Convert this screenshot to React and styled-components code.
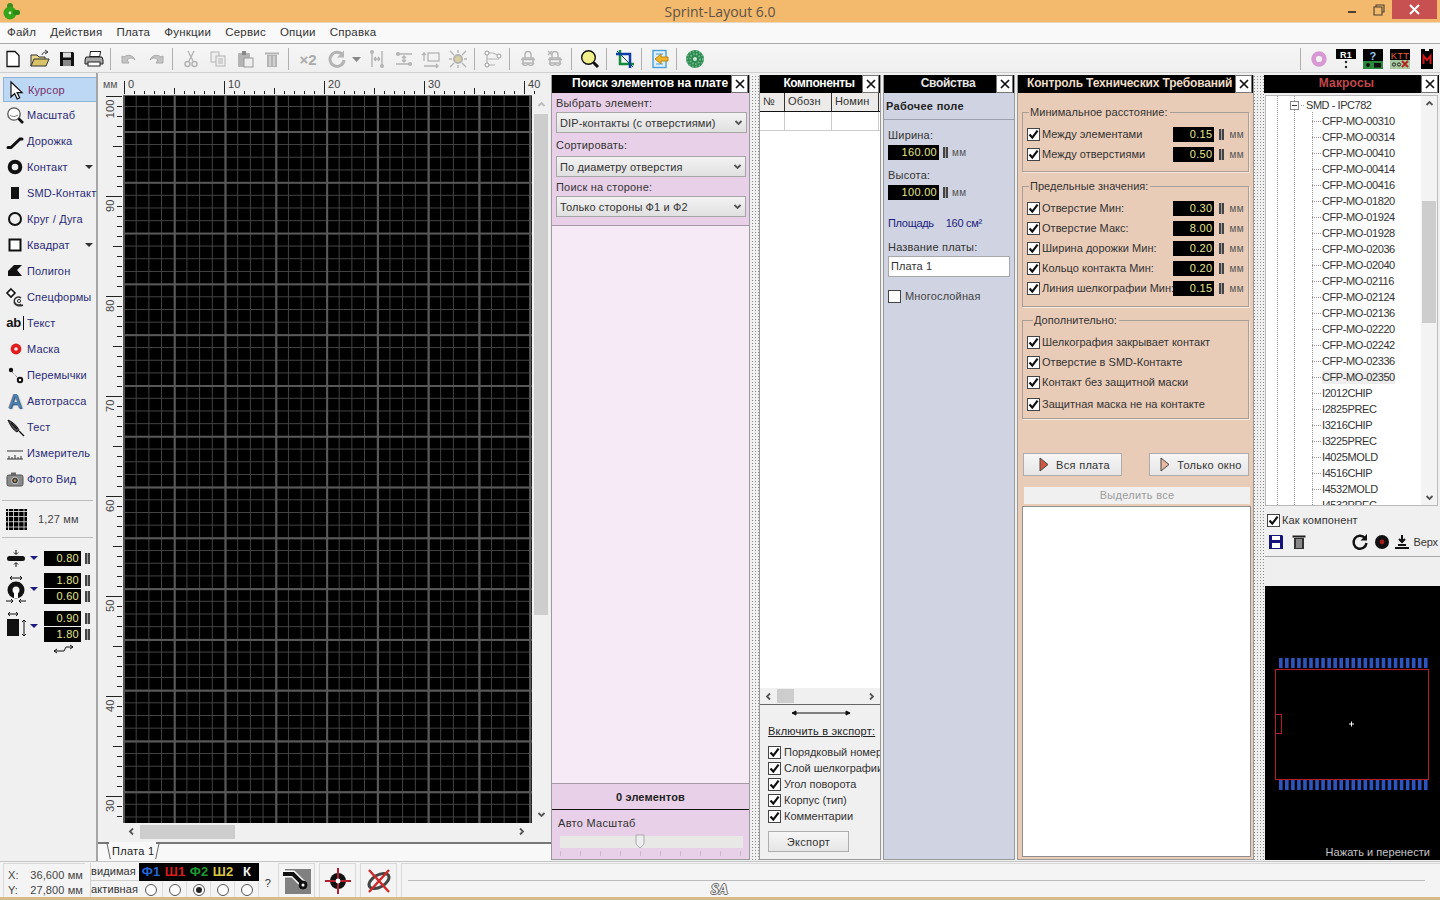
import React from "react";
import styled, { createGlobalStyle } from "styled-components";

const Global = createGlobalStyle`
  html, body { margin: 0; padding: 0; background: #f0f0f0; overflow: hidden; }
  * { box-sizing: border-box; }
`;

const Window = styled.div`
  width: 1440px; height: 900px; display: flex; flex-direction: column; overflow: hidden;
  background: #f0f0f0; color: #222; font-family: "Liberation Sans", Arial, sans-serif; font-size: 11px; letter-spacing: .15px;
`;
const TitleBar = styled.div`
  height: 23px; flex: none; display: grid; grid-template-columns: 1fr auto 1fr; align-items: center;
  background: #f3b96d; border-bottom: 1px solid #e9d6ba;
`;
const TitleText = styled.div`font: 14px "Open Sans", sans-serif; color: #5d5346; letter-spacing: 0; padding-top: 1px;`;
const TitleLogo = styled.div`display: flex; padding-left: 1px;`;
const WinControls = styled.div`display: flex; justify-content: flex-end; align-items: flex-start; height: 100%;`;
const WinBtn = styled.div`
  width: ${p => p.$w}px; height: 19px; display: flex; align-items: center; justify-content: center;
  background: ${p => p.$close ? "#c75050" : "transparent"}; margin-right: ${p => p.$close ? 3 : 0}px;
`;
const MenuBar = styled.div`
  height: 21px; flex: none; display: flex; gap: 14px; align-items: center; padding: 0 0 2px 7px;
  background: #f9f9f9; border-bottom: 1px solid #a8a8a8; font-size: 11.5px; letter-spacing: .23px; color: #333;
`;
const Toolbar = styled.div`
  height: 29px; flex: none; display: flex; align-items: center; padding-top: 2px;
  background: linear-gradient(#f6f6f6, #efefef); border-bottom: 1px solid #d0d0d0;
`;
const TBtn = styled.div`
  width: ${p => p.$w || 27}px; height: 24px; flex: none; display: flex; align-items: center; justify-content: center;
  margin-left: ${p => p.$ml || 0}px;
`;
const TSep = styled.div`width: 1px; height: 22px; flex: none; background: #b0b0b0; margin: 0 4px 0 3px;`;
const TSpacer = styled.div`flex: 1;`;
const X2 = styled.span`font-size: 15px; font-weight: 700; color: #aaa; letter-spacing: 0;`;
const Main = styled.div`height: 788px; flex: none; display: flex;`;

/* Left column */
const LeftCol = styled.div`
  width: 98px; flex: none; border-right: 2px solid #a5a5a5; padding-top: 3px; display: flex; flex-direction: column;
`;
const ToolRow = styled.div`
  height: 26px; display: flex; align-items: center; position: relative; padding-left: 3px;
  color: ${p => p.$active ? "#7a2f6a" : "#2b2b78"};
  ${p => p.$active && `background: #bcd8f4; border: 1px solid #8fb4d6; border-right: 0; margin-left: 3px; padding-left: 0; height: 25px; margin-top:1px;`}
`;
const ToolIcon = styled.div`width: 24px; height: 24px; flex: none; display: flex; align-items: center; justify-content: center; margin-right: 0;`;
const ToolText = styled.span`white-space: nowrap; padding-left: 0;`;
const ToolCaret = styled.span`
  margin-left: auto; margin-right: 3px; width: 0; height: 0; border-left: 4px solid transparent; border-right: 4px solid transparent; border-top: 4px solid #333;
`;
const AbText = styled.span`font-size: 13px; font-weight: 700; color: #111; border-right: 1px solid #111; padding-right: 2px; letter-spacing: -.3px; line-height: 14px;`;
const AutoA = styled.span`font-size: 20px; font-weight: 700; color: #4b7fb0; text-shadow: 1px 1px 1px #2c4f74; line-height: 20px;`;
const LeftDivider = styled.div`height: 1px; background: #bdbdbd; margin: ${p => p.$mt}px 3px 0 2px; flex: none;`;
const GridRow = styled.div`display: flex; align-items: center; height: 22px; margin-top: 7px; padding-left: 6px; gap: 11px; color: #444;`;
const GridIcon = styled.div`
  width: 21px; height: 21px; background-color: #000;
  background-image: linear-gradient(90deg, #ddd 1px, transparent 1px), linear-gradient(#ddd 1px, transparent 1px);
  background-size: 5.2px 5.2px; background-position: 2px 2px;
`;
const ParamGroup = styled.div`display: flex; margin-top: ${p => p.$mt}px; padding-left: 5px; align-items: center;`;
const ParamIcon = styled.div`width: 22px; flex: none; display: flex; justify-content: center;`;
const ParamCaret = styled.span`
  width: 0; height: 0; margin: 0 6px 0 3px; flex: none;
  border-left: 4px solid transparent; border-right: 4px solid transparent; border-top: 4px solid #1c1c80;
`;
const FieldStack = styled.div`display: flex; flex-direction: column; gap: 1px;`;
const FieldLine = styled.div`display: flex; align-items: center; gap: ${p => p.$gap ?? 4}px; margin-top: ${p => p.$mt || 0}px;`;
const Field = styled.div`
  width: ${p => p.$w || 37}px; height: 15px; background: #000; color: #e6e68f; text-align: right; padding-right: 2px;
  font-size: 11px; line-height: 15px; letter-spacing: .3px; flex: none;
`;
const Spin = styled.div`
  width: 5px; height: 11px; flex: none;
  background: linear-gradient(90deg, #444 0 2px, #a0a0a0 2px 3px, #444 3px 5px);
`;
const SwapRow = styled.div`display: flex; justify-content: center; padding-left: 29px; margin-top: 2px;`;

/* Canvas area */
const CenterArea = styled.div`width: 453px; flex: none; display: flex; flex-direction: column; background: #f0f0f0;`;
const RulerTop = styled.svg`display: block; flex: none;`;
const RulerSide = styled.svg`display: block; flex: none;`;
const MiddleRow = styled.div`display: flex; height: 728px; flex: none;`;
const Board = styled.div`
  width: 409px; height: 728px; flex: none; background-color: #000;
  background-image:
    linear-gradient(90deg, #585858 2px, transparent 2px),
    linear-gradient(#585858 2px, transparent 2px),
    linear-gradient(90deg, #444 1px, transparent 1px),
    linear-gradient(#444 1px, transparent 1px);
  background-size: 50.8px 50.8px, 50.8px 50.8px, 12.7px 12.7px, 12.7px 12.7px;
  background-position: 0 35px, 0 35px, 0 10px, 0 10px;
  border-top: 1px solid #666;
`;
const VScroll = styled.div`width: 18px; flex: none; display: flex; flex-direction: column; align-items: center; padding: 5px 2px 4px 2px;`;
const VThumb = styled.div`width: 14px; height: 501px; background: #cdcdcd; margin-top: 5px; align-self: center;`;
const HScrollBar = styled.div`
  height: 15px; flex: none; margin: 1px 21px 0 25px; display: flex; align-items: center; justify-content: space-between; padding: 0 4px;
`;
const HThumbTrack = styled.div`flex: 1; height: 14px; padding-left: 4px; display: flex;`;
const HThumb = styled.div`width: ${p => p.$w}px; height: 14px; background: #cdcdcd;`;
const Spacer = styled.div`flex: 1;`;
const TabStrip = styled.div`
  margin-top: 3px; height: 20px; flex: none; border-top: 2px solid #777; background: #f8f8f8; padding-left: 11px;
`;
const Tab = styled.div`
  position: relative; width: 47px; height: 18px; margin-top: -2px; background: #f8f8f8; padding: 3px 0 0 3px; color: #222; letter-spacing: .3px;
  &::before, &::after { content: ""; position: absolute; top: 0; width: 1px; height: 17px; background: #666; }
  &::before { left: -1px; transform: skewX(12deg); }
  &::after { right: -2px; transform: skewX(-12deg); }
`;

/* Panels */
const PanelRow = styled.div`flex: 1; display: flex; padding: 2px 0 1px 0; min-width: 0;`;
const Panel = styled.div`
  width: ${p => p.$w}px; flex: none; margin-left: ${p => p.$ml || 0}px; display: flex; flex-direction: column;
  background: ${p => p.$bg}; border: 1px solid #9a9a9a; border-top: 0; overflow: hidden;
`;
const Splitter = styled.div`
  width: ${p => p.$w}px; flex: none;
  background-image: radial-gradient(#8c8c8c .7px, transparent .8px); background-size: 3px 3px; background-position: ${p => p.$x}px 0;
`;
const PanelHead = styled.div`
  height: 18px; flex: none; display: flex; align-items: stretch; background: #000; font-size: 12px; font-weight: 700; line-height: 17px;
  letter-spacing: ${p => p.$ls ?? .2}px; color: ${p => p.$c || "#fff"};
`;
const HeadTitle = styled.div`flex: 1; text-align: ${p => p.$align || "center"}; padding: 0 ${p => p.$pr || 0}px 0 ${p => p.$pl || 0}px; white-space: nowrap; overflow: hidden;`;
const CloseBtn = styled.div`
  width: 17px; height: 18px; flex: none; background: #fff; border: 1px solid #777; margin-right: 1px; display: flex; align-items: center; justify-content: center;
`;
const SearchTop = styled.div`
  height: 133px; flex: none; background: #e8d0e8; border-bottom: 1px solid #a599a8; padding: 3px 2px 0 4px;
`;
const FormLabel = styled.div`height: 14px; line-height: 14px; margin-top: ${p => p.$mt || 0}px; color: #333; letter-spacing: .2px;`;
const SelectBox = styled.div`
  height: 21px; margin-top: ${p => p.$mt}px; display: flex; align-items: center; justify-content: space-between; padding: 0 3px 0 3px;
  width: ${p => p.$w || 191}px; background: linear-gradient(#f3f3f3, #e0e0e0); border: 1px solid #a6a6a6; color: #333; letter-spacing: .12px;
`;
const SearchMid = styled.div`flex: 1; background: #f6eaf6; border-bottom: 1px solid #a599a8;`;
const SearchFoot = styled.div`height: 75px; flex: none; background: #e8d0e8; padding: 0 3px;`;
const CountLine = styled.div`
  height: 26px; margin: 0 -3px; border-bottom: 1px solid #111; text-align: center; line-height: 27px; font-weight: 700; color: #222;
`;
const SliderLabel = styled.div`padding: 7px 0 0 3px; color: #333; letter-spacing: .3px;`;
const SliderTrack = styled.div`
  height: 12px; margin: 7px 3px 0 5px; background: #e8e8e6; display: flex; justify-content: center; position: relative;
`;
const SliderThumb = styled.svg`position: absolute; top: -2px; left: 75px;`;
const SliderTicks = styled.div`
  height: 5px; margin: 3px 4px 0 5px;
  background-image: linear-gradient(90deg, #cbb5cb 1px, transparent 1px); background-size: 20px 5px;
`;

/* Components */
const CompHead = styled.div`display: flex; height: 19px; flex: none; background: #ecebe9; border-bottom: 1px solid #111; line-height: 17px; color: #333;`;
const CompCell = styled.div`width: ${p => p.$w}px; flex: none; padding-left: 3px; border-right: 1px solid #333;`;
const CompRow = styled.div`display: flex; height: 19px; flex: none; background: #fff; border-bottom: 1px solid #ccc;`;
const CompBlank = styled.div`width: ${p => p.$w}px; flex: none; border-right: 1px solid #ccc;`;
const CompBody = styled.div`flex: 1; background: #fff;`;
const CompScroll = styled.div`
  height: 17px; flex: none; background: #f0f0f0; border-bottom: 1px solid #666; display: flex; align-items: center; padding: 0 4px; justify-content: space-between;
`;
const CompThumbWrap = styled.div`flex: 1; padding-left: 4px; display: flex;`;
const CompExport = styled.div`height: 154px; flex: none; padding: 0 0 0 8px; overflow: hidden;`;
const ArrowRow = styled.div`padding: 2px 0 0 23px; height: 16px;`;
const ExportTitle = styled.div`text-decoration: underline; color: #222; margin-top: 3px; letter-spacing: .2px; height: 14px; line-height: 14px;`;
const CheckLine = styled.div`
  display: flex; align-items: center; gap: 3px; height: ${p => p.$h || 16}px; white-space: nowrap; margin-top: ${p => p.$mt || 0}px; color: #333; letter-spacing: -.02px; flex: none;
`;
const CheckStack = styled.div`margin-top: 6px;`;
const BoxCheck = styled.span`
  width: 13px; height: 13px; flex: none; background: #fff; border: 1px solid #444; display: inline-flex; align-items: center; justify-content: center;
`;
const PlainBtn = styled.div`
  width: ${p => p.$w}px; height: ${p => p.$h}px; margin-top: ${p => p.$mt || 0}px; flex: none; display: flex; align-items: center; justify-content: center; gap: 7px;
  padding-left: ${p => p.$pl || 0}px;
  background: linear-gradient(#f6f6f6, #e6e6e6); border: 1px solid #adadad; color: #333; letter-spacing: .3px;
`;

/* Properties */
const PropHead = styled.div`height: 27px; flex: none; border-bottom: 1px solid #9da0ad; padding: 7px 0 0 2px; font-weight: 700; color: #222; letter-spacing: .3px;`;
const PropBody = styled.div`padding: 8px 4px 0 4px;`;
const UnitText = styled.span`color: #555; font-size: 10px; letter-spacing: .4px;`;
const AreaLine = styled.div`display: flex; gap: 12px; color: #1d1d80; margin-top: 16px; height: 14px; line-height: 14px; letter-spacing: -.3px;`;
const NameInput = styled.div`
  width: 122px; height: 21px; margin-top: 2px; background: #fff; border: 1px solid #a8a8a8; line-height: 19px; padding-left: 2px; color: #333; letter-spacing: .1px;
`;
const MultiLabel = styled.span`margin-left: 1px; color: #444; letter-spacing: .15px;`;

/* KTT */
const KttBody = styled.div`flex: 1; padding: 0 4px 2px 4px; display: flex; flex-direction: column; min-height: 0;`;
const Group = styled.fieldset`
  margin: ${p => p.$mt}px 0 0 0; padding: 5px 0 ${p => p.$pb}px 4px; width: 227px; border: 1px solid #a89e96; box-shadow: 1px 1px 0 #f6e8dc; flex: none; min-width: 0;
  legend { padding: 0 2px 0 1px; margin-left: ${p => p.$lg || 2}px; height: 14px; line-height: 14px; color: #333; letter-spacing: .05px; }
`;
const KttRow = styled.div`
  display: flex; align-items: center; height: 20px; margin-top: ${p => p.$mt || 0}px; white-space: nowrap; color: #333; letter-spacing: .02px;
`;
const KttLabel = styled.span`margin-left: 2px; width: 128px; flex: none;`;
const KttFill = styled.div`margin-left: auto; margin-right: 4px; display: flex; align-items: center; gap: 5px;`;
const BtnRow = styled.div`display: flex; justify-content: space-between; margin-top: 34px; padding-left: 1px; width: 227px; flex: none;`;
const SelectAll = styled.div`
  height: 17px; margin: 11px 0 0 2px; width: 226px; flex: none; background: #f0f0f0; color: #9c9c9c; text-align: center; line-height: 16px; letter-spacing: .3px;
`;
const ResultList = styled.div`flex: 1; margin-top: 2px; width: 229px; background: #fff; border: 1px solid #8e8e8e;`;

/* Macros */
const MacroPanel = styled(Panel)`border: 0; background: #f0f0f0;`;
const MacroHeadWrap = styled.div`height: 18px; flex: none; margin-right: 1px;`;
const TreeWrap = styled.div`
  height: 411px; flex: none; margin: 2px 2px 0 1px; display: flex; background: #fff; border: 1px solid #bbb; overflow: hidden;
`;
const TreeBody = styled.div`
  flex: 1; overflow: hidden; padding-top: 1px; position: relative; min-width: 0;
  background-image: repeating-linear-gradient(#999 0 1px, transparent 1px 2px), repeating-linear-gradient(#999 0 1px, transparent 1px 2px), repeating-linear-gradient(#999 0 1px, transparent 1px 2px);
  background-size: 1px 100%; background-repeat: no-repeat; background-position: 11px 0, 46px 16px, 28px 0;
`;
const TreeRoot = styled.div`height: 16px; display: flex; align-items: center; padding-left: 24px; gap: 2px; color: #333; white-space: nowrap; letter-spacing: -.45px;`;
const RootDash = styled.span`width: 3px; height: 1px; flex: none; background: repeating-linear-gradient(90deg, #999 0 1px, transparent 1px 2px);`;
const MinusBox = styled.span`
  width: 9px; height: 9px; border: 1px solid #888; background: #fff; display: inline-flex; align-items: center; justify-content: center; flex: none;
  &::after { content: ""; width: 5px; height: 1px; background: #333; }
`;
const TreeItem = styled.div`height: 16px; display: flex; align-items: center; padding-left: 46px; color: #333; white-space: nowrap; letter-spacing: -.4px;`;
const TreeDash = styled.span`width: 9px; height: 1px; flex: none; margin-right: 1px; background: repeating-linear-gradient(90deg, #999 0 1px, transparent 1px 2px);`;
const TreeLabel = styled.span`background: ${p => p.$sel ? "#eeeeee" : "transparent"}; line-height: 13px;`;
const TreeScroll = styled.div`width: 16px; flex: none; background: #f3f3f3; display: flex; flex-direction: column; align-items: center; justify-content: space-between; padding: 3px 0; position: relative;`;
const TreeThumb = styled.div`position: absolute; top: 105px; left: 1px; width: 14px; height: 122px; background: #cdcdcd;`;
const AsComp = styled.div`display: flex; align-items: center; gap: 2px; height: 14px; margin: 7px 0 0 3px; flex: none; color: #333; letter-spacing: .1px;`;
const MacroIcons = styled.div`display: flex; align-items: center; height: 20px; margin-top: 5px; padding: 0 2px 0 3px; flex: none;`;
const MacroIconGap = styled.div`flex: 1;`;
const MacroIconItem = styled.div`width: ${p => p.$w}px; flex: none; display: flex; justify-content: center;`;
const TopLabel = styled.span`color: #333; margin-left: 3px; white-space: nowrap; letter-spacing: -.1px;`;
const PreviewHeader = styled.div`height: 30px; flex: none; margin: 4px 0 0 1px; background: #efefef; border-top: 1px solid #a8a8a8;`;
const Preview = styled.div`flex: 1; margin-left: 1px; background: #000; position: relative;`;
const PreviewSvg = styled.svg`display: block;`;
const PreviewCaption = styled.div`position: absolute; right: 10px; bottom: 2px; color: #c4c4c4; letter-spacing: .05px;`;

/* Status */
const StatusBar = styled.div`
  height: 36px; flex: none; display: flex; align-items: flex-start; padding: 1px 0 0 3px; border-top: 1px solid #c4c4c4; background: #f4f4f4;
`;
const BottomEdge = styled.div`height: 3px; flex: none; background: #d8b988;`;
const Coords = styled.div`
  width: 82px; height: 35px; flex: none; border-left: 1px solid #d8d8d8; border-top: 1px solid #d8d8d8; padding: 4px 2px 0 4px; color: #444; letter-spacing: .1px;
`;
const CoordLine = styled.div`display: flex; justify-content: space-between; height: 15px; line-height: 15px;`;
const LayerTable = styled.div`margin-left: 5px; width: 168px; flex: none; display: flex; flex-direction: column; border-left: 1px solid #d4d4d4;`;
const LayerRow = styled.div`display: flex; height: ${p => p.$h}px;`;
const LayerName = styled.div`width: 48px; flex: none; color: #333; line-height: ${p => p.$h}px; border-bottom: ${p => p.$b ? "1px solid #d0d0d0" : "0"}; letter-spacing: .1px;`;
const LayerCell = styled.div`
  width: 24px; flex: none; background: #000; color: ${p => p.$c}; font-size: 13px; font-weight: 700; text-align: center; line-height: 18px; letter-spacing: 0;
`;
const RadioCell = styled.div`width: 24px; flex: none; display: flex; align-items: center; justify-content: center; border-right: 1px solid #dcdcdc;`;
const Radio = styled.span`
  width: 12px; height: 12px; border-radius: 50%; border: 1px solid #555; background: #fff; display: inline-flex; align-items: center; justify-content: center;
  ${p => p.$on && `&::after { content: ""; width: 6px; height: 6px; border-radius: 50%; background: #222; }`}
`;
const Question = styled.div`width: 20px; flex: none; text-align: center; padding-top: 14px; color: #333;`;
const StatusBtn = styled.div`
  width: 37px; height: 35px; flex: none; margin-left: ${p => p.$ml}px; border-left: 1px solid #d8d8d8; border-top: 1px solid #d8d8d8; border-right: 1px solid #d8d8d8; display: flex; align-items: center; justify-content: center;
`;
const StatusRest = styled.div`
  flex: 1; margin-left: 4px; height: 35px; border-left: 1px solid #d8d8d8; border-top: 1px solid #d8d8d8; padding: 16px 15px 0 6px;
`;
const StatusRule = styled.div`height: 1px; background: #bcbcbc;`;
const SaMark = styled.div`
  padding-left: 303px; font: italic 700 14px "Liberation Serif", serif; color: #f4f4f4; margin-top: 2px; line-height: 13px; letter-spacing: 0;
  text-shadow: 1px 0 0 #666, -1px 0 0 #666, 0 1px 0 #666, 0 -1px 0 #666;
`;

/* Icons */
const Ico = ({ w = 20, h = 20, vb, children }) => <svg width={w} height={h} viewBox={vb || `0 0 ${w} ${h}`}>{children}</svg>;
const G = "#b4b4b4";
const Check = () => <svg width="11" height="11" viewBox="0 0 11 11"><path d="M1.5 5.5 4.3 8.6 9.6 1.6" fill="none" stroke="#111" strokeWidth="2.2" /></svg>;
const Cb = () => <BoxCheck><Check /></BoxCheck>;
const CloseX = () => <svg width="10" height="10" viewBox="0 0 10 10"><path d="M1 1 9 9M9 1 1 9" stroke="#111" strokeWidth="1.7" /></svg>;
const Chev = ({ d = "down", c = "#555", s = 9 }) => {
  const p = { down: "M1.5 3 4.5 6 7.5 3", up: "M1.5 6 4.5 3 7.5 6", left: "M6 1.5 3 4.5 6 7.5", right: "M3 1.5 6 4.5 3 7.5" }[d];
  return <svg width={s} height={s} viewBox="0 0 9 9"><path d={p} fill="none" stroke={c} strokeWidth="1.8" /></svg>;
};
const GrayLock = ({ cross }) => <Ico>
  <rect x="5" y="9" width="10" height="5" fill="none" stroke={G} strokeWidth="1.5" />
  <path d="M7 9V5.5a3 3 0 0 1 6 0V9M3 10.5h14M4 14c2 3 4 3 6 1 2 2 4 2 6-1" fill="none" stroke={G} strokeWidth="1.4" />
  {cross && <path d="M3 2l4 4M7 2 3 6" stroke={G} strokeWidth="1.3" />}
</Ico>;

const toolIcons = {
  cursor: <Ico><path d="M5 2v15l3.6-3.4 2.6 5.4 2.5-1.2-2.6-5.2h5z" fill="#fff" stroke="#111" strokeWidth="1.2" /></Ico>,
  zoom: <Ico><circle cx="9" cy="9" r="6.2" fill="#fff" stroke="#555" strokeWidth="1.3" /><path d="M5 10c2 2 5 2 8 0" fill="none" stroke="#777" /><path d="M13.5 13.5 18 18" stroke="#111" strokeWidth="2.6" /></Ico>,
  track: <Ico><path d="M3 16.5h3L15 8h2" fill="none" stroke="#111" strokeWidth="3" strokeLinecap="round" /></Ico>,
  pad: <Ico><circle cx="10" cy="10" r="5.3" fill="none" stroke="#111" strokeWidth="4" /></Ico>,
  smd: <Ico><rect x="6" y="4" width="8" height="12" fill="#111" /></Ico>,
  circle: <Ico><circle cx="10" cy="10" r="6" fill="none" stroke="#111" strokeWidth="2" /></Ico>,
  square: <Ico><rect x="4.5" y="4.5" width="11" height="11" fill="#fff" stroke="#111" strokeWidth="2" /></Ico>,
  polygon: <Ico><path d="M3 15 3 10 9 4h8l-5 5 5 6z" fill="#111" /></Ico>,
  special: <Ico><path d="M6 2 10 6 6 10 2 6z" fill="#fff" stroke="#111" strokeWidth="1.6" /><path d="M16 11a4 4 0 1 0 0 6M9 15a6 5 0 0 0 9 3" fill="none" stroke="#333" strokeWidth="1.6" /><circle cx="14" cy="14" r="1.6" fill="none" stroke="#333" /></Ico>,
  text: <AbText>ab</AbText>,
  mask: <Ico><circle cx="11" cy="10" r="5.4" fill="#e21c1c" /><circle cx="11" cy="10" r="1.8" fill="#eee" /></Ico>,
  jumper: <Ico><circle cx="6" cy="5" r="2.2" fill="#111" /><circle cx="15" cy="15" r="2.2" fill="#fff" stroke="#111" strokeWidth="2" /><path d="M7 7l6 6" stroke="#777" strokeDasharray="1 1" /></Ico>,
  auto: <AutoA>A</AutoA>,
  test: <Ico><path d="M3 3c5 2 9 6 11 10l-2 2C8 13 5 8 3 3z" fill="#555" stroke="#111" /><path d="M14 14l5 5M6 6l6 6" stroke="#111" strokeWidth="1.4" /></Ico>,
  measure: <Ico><path d="M2 8h16M2 16h16M4 13v3M7 14v2M10 12v4M13 14v2M16 13v3" stroke="#333" strokeWidth="1" fill="none" /></Ico>,
  photo: <Ico><rect x="2" y="6" width="16" height="11" rx="2" fill="#8a8a8a" stroke="#555" /><rect x="6" y="3.5" width="5" height="3" fill="#666" /><circle cx="10" cy="11.5" r="3.4" fill="#3b3b3b" stroke="#ccc" /><circle cx="10" cy="11.5" r="1.3" fill="#b98c55" /></Ico>,
};

const tools = [
  ["Курсор", "cursor"], ["Масштаб", "zoom"], ["Дорожка", "track"], ["Контакт", "pad", true], ["SMD-Контакт", "smd"],
  ["Круг / Дуга", "circle"], ["Квадрат", "square", true], ["Полигон", "polygon"], ["Спецформы", "special"], ["Текст", "text"],
  ["Маска", "mask"], ["Перемычки", "jumper"], ["Автотрасса", "auto"], ["Тест", "test"], ["Измеритель", "measure"], ["Фото Вид", "photo"],
];

const TopRuler = () => {
  const ticks = [];
  for (let x = 124, i = 0; x <= 540; x += 10, i++) {
    const major = i % 10 === 0, mid = i % 5 === 0;
    ticks.push(<line key={x} x1={x - 98 + .5} x2={x - 98 + .5} y1={major ? 8 : mid ? 15 : 18} y2={21} stroke="#222" />);
    if (major) ticks.push(<text key={"t" + x} x={x - 98 + 4} y={15} fontSize="11" fill="#444" fontFamily="Liberation Sans">{i}</text>);
  }
  return <RulerTop width="453" height="22">
    <text x="5" y="15" fontSize="10.5" fill="#555" fontFamily="Liberation Sans">мм</text>
    {ticks}
  </RulerTop>;
};

const SideRuler = () => {
  const items = [];
  for (let i = 0; i <= 72; i++) {
    const y = 1.5 + i * 10 , major = i % 10 === 0, mid = i % 5 === 0;
    items.push(<line key={i} x1={major ? 8 : mid ? 15 : 19} x2={24} y1={y} y2={y} stroke="#222" />);
    if (major) items.push(<text key={"t" + i} transform={`translate(16 ${y + 3}) rotate(-90)`} textAnchor="end" fontSize="11" fill="#444" fontFamily="Liberation Sans">{100 - i}</text>);
  }
  return <RulerSide width="25" height="728">{items}</RulerSide>;
};

const ParamIcon1 = () => <Ico w={20} h={20}><rect x="1" y="8" width="18" height="5" rx="2.5" fill="#111" /><path d="M10 2v4M10 15v4M8 4.5 10 6.5 12 4.5M8 16.5 10 14.5 12 16.5" stroke="#111" fill="none" /></Ico>;
const ParamIcon2 = () => <Ico w={22} h={30}><path d="M5 4h12M5 4l2-2M5 4l2 2M17 4l-2-2M17 4l-2 2" stroke="#111" fill="none" /><circle cx="11" cy="16" r="6" fill="none" stroke="#111" strokeWidth="5" /><rect x="9" y="16" width="4" height="8" fill="#fff" /><path d="M1 27h7M8 27l-2-2M8 27l-2 2M21 27h-7M14 27l2-2M14 27l2 2" stroke="#111" fill="none" /></Ico>;
const ParamIcon3 = () => <Ico w={22} h={32}><path d="M3 4h10M3 4l2-2M3 4l2 2M13 4l-2-2M13 4l-2 2M19 10v16M19 10l-2 2M19 10l2 2M19 26l-2-2M19 26l2-2" stroke="#111" fill="none" /><rect x="2" y="9" width="12" height="17" fill="#111" /></Ico>;

const TreeNames = ["CFP-MO-00310", "CFP-MO-00314", "CFP-MO-00410", "CFP-MO-00414", "CFP-MO-00416", "CFP-MO-01820", "CFP-MO-01924", "CFP-MO-01928", "CFP-MO-02036", "CFP-MO-02040", "CFP-MO-02116", "CFP-MO-02124", "CFP-MO-02136", "CFP-MO-02220", "CFP-MO-02242", "CFP-MO-02336", "CFP-MO-02350", "I2012CHIP", "I2825PREC", "I3216CHIP", "I3225PREC", "I4025MOLD", "I4516CHIP", "I4532MOLD", "I4532PREC"];

const Close = () => <CloseBtn><CloseX /></CloseBtn>;
const Unit = () => <UnitText>мм</UnitText>;

const KRow = ({ label, value, mt }) => (
  <KttRow $mt={mt}>
    <Cb /><KttLabel>{label}</KttLabel>
    {value && <KttFill><Field $w={41}>{value}</Field><Spin /><Unit /></KttFill>}
  </KttRow>
);

const PlayIcon = ({ fill }) => <svg width="10" height="15" viewBox="0 0 10 15"><path d="M1 1v13l8-6.5z" fill={fill} stroke="#444" /></svg>;

export default function App() {
  return (
    <Window>
      <Global />
      <TitleBar>
        <TitleLogo>
          <svg width="20" height="20" viewBox="0 0 20 20"><circle cx="9" cy="5" r="3" fill="#3e8a1c" /><circle cx="9" cy="12" r="6.5" fill="#37a51c" /><rect x="12" y="9" width="7" height="5" rx="2" fill="#2a8a15" /><circle cx="9" cy="12" r="1.4" fill="#dff0c0" /></svg>
        </TitleLogo>
        <TitleText>Sprint-Layout 6.0</TitleText>
        <WinControls>
          <WinBtn $w={27}><svg width="10" height="10"><rect x="1" y="6" width="8" height="2" fill="#4a4036" /></svg></WinBtn>
          <WinBtn $w={27}><svg width="12" height="12" viewBox="0 0 12 12"><path d="M3 3V1h8v7H9M1 3h8v8H1z" fill="none" stroke="#4a4036" strokeWidth="1.1" /></svg></WinBtn>
          <WinBtn $w={45} $close><svg width="11" height="11" viewBox="0 0 11 11"><path d="M1 1l9 9M10 1l-9 9" stroke="#fff" strokeWidth="2" /></svg></WinBtn>
        </WinControls>
      </TitleBar>
      <MenuBar>
        {["Файл", "Действия", "Плата", "Функции", "Сервис", "Опции", "Справка"].map(m => <span key={m}>{m}</span>)}
      </MenuBar>
      <Toolbar>
        <TBtn $ml={-1}><Ico><path d="M4 2.5h8l4 4v11H4z" fill="#fff" stroke="#111" strokeWidth="1.3" /></Ico></TBtn>
        <TBtn><Ico><path d="M1 17V6h6l2 2h6v2" fill="#e8d88a" stroke="#333" /><path d="M1 17l3-7h15l-3 7z" fill="#d8c26a" stroke="#333" /><path d="M12 6c1-3 3-3 5-3M15 1l3 2-3 2" fill="none" stroke="#333" /></Ico></TBtn>
        <TBtn><Ico><path d="M3 3h13l1 1v13H3z" fill="#111" /><rect x="6" y="3.5" width="8" height="5" fill="#ddd" /><rect x="6" y="11" width="8" height="6" fill="#888" /></Ico></TBtn>
        <TBtn><Ico><rect x="5" y="2.5" width="10" height="5" fill="#fff" stroke="#222" transform="skewX(-10) translate(2 0)" /><path d="M2 8h16l1 3v4H1v-4z" fill="#aaa" stroke="#222" /><rect x="4" y="13" width="12" height="4" fill="#fff" stroke="#222" /></Ico></TBtn>
        <TSep />
        <TBtn><Ico><path d="M5 8c4-3 9-2 11 3-3-3-6-2-8 0l2 3H3V7z" fill="#c4c4c4" stroke="#aaa" /></Ico></TBtn>
        <TBtn><Ico><path d="M15 8c-4-3-9-2-11 3 3-3 6-2 8 0l-2 3h7V7z" fill="#c4c4c4" stroke="#aaa" /></Ico></TBtn>
        <TSep />
        <TBtn><Ico><path d="M7 2l5 10M13 2 8 12" stroke={G} strokeWidth="1.4" /><circle cx="6.5" cy="15" r="2.5" fill="none" stroke={G} strokeWidth="1.5" /><circle cx="13.5" cy="15" r="2.5" fill="none" stroke={G} strokeWidth="1.5" /></Ico></TBtn>
        <TBtn><Ico><rect x="3" y="3" width="8" height="10" fill="#eee" stroke={G} /><rect x="8" y="7" width="9" height="10" fill="#eee" stroke={G} /><path d="M10 10h5M10 12h5M10 14h5" stroke={G} /></Ico></TBtn>
        <TBtn><Ico><rect x="3" y="4" width="12" height="14" rx="1" fill={G} /><rect x="7" y="2" width="4" height="4" fill="#888" /><rect x="9" y="9" width="9" height="9" fill="#eee" stroke="#999" /></Ico></TBtn>
        <TBtn><Ico><rect x="5" y="6" width="10" height="12" fill={G} /><rect x="3" y="3.5" width="14" height="2" fill={G} /><path d="M8 7v10M12 7v10" stroke="#eee" /></Ico></TBtn>
        <TSep />
        <TBtn $w={30}><X2>×2</X2></TBtn>
        <TBtn><Ico><path d="M15.5 6A7 7 0 1 0 17 11" fill="none" stroke={G} strokeWidth="3" /><path d="M17 1.5v7h-7z" fill={G} /></Ico></TBtn>
        <TBtn $w={13}><svg width="9" height="5"><path d="M0 0h9L4.5 5z" fill="#888" /></svg></TBtn>
        <TBtn><Ico><path d="M5 2v16M15 2v16M7 10h6M7 10l2-2M7 10l2 2M13 10l-2-2M13 10l-2 2" stroke={G} strokeWidth="1.4" fill="none" /><circle cx="5" cy="3" r="2" fill={G} /><circle cx="15" cy="17" r="2" fill={G} /></Ico></TBtn>
        <TBtn><Ico><path d="M2 5h16M2 15h16M10 7v6M8 9l2-2 2 2M8 11l2 2 2-2" stroke={G} strokeWidth="1.4" fill="none" /><circle cx="4" cy="5" r="2" fill={G} /><circle cx="16" cy="15" r="2" fill={G} /></Ico></TBtn>
        <TBtn><Ico><rect x="7" y="4" width="11" height="8" fill="none" stroke={G} strokeWidth="1.3" /><path d="M3 4v8M1 6l2-2 2 2M3 17h14M15 15l2 2-2 2" stroke={G} strokeWidth="1.3" fill="none" /></Ico></TBtn>
        <TBtn><Ico><circle cx="10" cy="10" r="4" fill="#d8d0a0" stroke={G} strokeWidth="2" /><path d="M2 2l4 4M18 2l-4 4M2 18l4-4M18 18l-4-4M10 1v3M10 16v3M1 10h3M16 10h3" stroke={G} strokeWidth="1.4" /></Ico></TBtn>
        <TSep />
        <TBtn><Ico><path d="M4 3v14M4 4h6l7 3M4 10h12M4 16h8" stroke={G} strokeWidth="1.2" fill="none" /><circle cx="4" cy="4" r="2" fill="#fff" stroke="#999" /><circle cx="16" cy="7" r="2" fill="#fff" stroke="#999" /><circle cx="4" cy="16" r="2" fill="#fff" stroke="#999" /></Ico></TBtn>
        <TSep />
        <TBtn><GrayLock /></TBtn>
        <TBtn><GrayLock cross /></TBtn>
        <TSep />
        <TBtn><Ico><circle cx="8.5" cy="8.5" r="6.8" fill="#f2f08c" stroke="#111" strokeWidth="1.4" /><path d="M13.5 13.5 18 18" stroke="#111" strokeWidth="3" /></Ico></TBtn>
        <TSep />
        <TBtn><Ico><path d="M5 1v14h14" fill="none" stroke="#128d3a" strokeWidth="2.5" /><path d="M1 5h14v14" fill="none" stroke="#0b3ea8" strokeWidth="2.5" /><path d="M2 2l16 16" stroke="#0a4a6a" strokeWidth="1" /></Ico></TBtn>
        <TSep />
        <TBtn><Ico><rect x="3" y="1.5" width="13" height="17" fill="#dceffa" stroke="#4aa0d8" strokeWidth="1.4" /><path d="M6 5h7M6 15h7" stroke="#4aa0d8" /><path d="M5 10l6-5v3h7v4h-7v3z" fill="#f0b428" stroke="#b8861c" /></Ico></TBtn>
        <TSep />
        <TBtn><Ico><circle cx="10" cy="10" r="9" fill="#2f8a52" /><circle cx="10" cy="10" r="8" fill="none" stroke="#6cb888" strokeWidth="2" strokeDasharray="1.5 2" /><circle cx="10" cy="10" r="5" fill="none" stroke="#6cb888" strokeWidth="2" strokeDasharray="1.5 1.5" /><circle cx="10" cy="10" r="2" fill="#cfe6d6" /></Ico></TBtn>
        <TSpacer />
        <TSep />
        <TBtn><Ico><circle cx="10" cy="10" r="5.4" fill="none" stroke="#d898d4" strokeWidth="4.6" /></Ico></TBtn>
        <TBtn><Ico w={20} h={20}><rect y="0" width="20" height="10" fill="#000" /><text x="10" y="8.5" textAnchor="middle" fontSize="9" fontWeight="700" fill="#fff" fontFamily="Liberation Sans">R1</text><circle cx="10" cy="13" r="1.2" fill="#222" /><circle cx="10" cy="18" r="1.2" fill="#222" /></Ico></TBtn>
        <TBtn><Ico><rect width="20" height="20" fill="#000" /><text x="10" y="11" textAnchor="middle" fontSize="11" fontWeight="700" fill="#9ac8f0" fontFamily="Liberation Sans">?</text><rect y="12" width="20" height="8" fill="#2b8a3e" /><circle cx="5" cy="16" r="2" fill="#111" /><rect x="11" y="14" width="7" height="4.5" fill="#111" /></Ico></TBtn>
        <TBtn><Ico><rect width="20" height="11" fill="#000" /><text x="10" y="9.5" textAnchor="middle" fontSize="9.5" fill="#e8603c" fontFamily="Liberation Sans">KTT</text><rect y="11" width="20" height="9" fill="#a8c8a0" /><circle cx="4" cy="15.5" r="1.6" fill="none" stroke="#222" /><circle cx="9" cy="15.5" r="1.6" fill="none" stroke="#222" /><path d="M12 12l6 6M18 12l-6 6" stroke="#b4261c" strokeWidth="2" /></Ico></TBtn>
        <TBtn><Ico><path d="M4 0h4v2h4V0h4v20H4z" fill="#000" /><path d="M6.5 15V7l3.5 4 3.5-4v8" fill="none" stroke="#d01818" strokeWidth="2" /></Ico></TBtn>
      </Toolbar>
      <Main>
        <LeftCol>
          {tools.map(([label, icon, caret], i) => (
            <ToolRow key={label} $active={i === 0}>
              <ToolIcon>{toolIcons[icon]}</ToolIcon>
              <ToolText>{label}</ToolText>
              {caret && <ToolCaret />}
            </ToolRow>
          ))}
          <LeftDivider $mt={8} />
          <GridRow><GridIcon /><span>1,27 мм</span></GridRow>
          <LeftDivider $mt={7} />
          <ParamGroup $mt={10}>
            <ParamIcon><ParamIcon1 /></ParamIcon><ParamCaret />
            <FieldLine><Field>0.80</Field><Spin /></FieldLine>
          </ParamGroup>
          <ParamGroup $mt={5}>
            <ParamIcon><ParamIcon2 /></ParamIcon><ParamCaret />
            <FieldStack>
              <FieldLine><Field>1.80</Field><Spin /></FieldLine>
              <FieldLine><Field>0.60</Field><Spin /></FieldLine>
            </FieldStack>
          </ParamGroup>
          <ParamGroup $mt={6}>
            <ParamIcon><ParamIcon3 /></ParamIcon><ParamCaret />
            <FieldStack>
              <FieldLine><Field>0.90</Field><Spin /></FieldLine>
              <FieldLine><Field>1.80</Field><Spin /></FieldLine>
            </FieldStack>
          </ParamGroup>
          <SwapRow><svg width="22" height="10" viewBox="0 0 22 10"><path d="M2 7h10l2-4h7M2 7l3-2M2 7l3 2M21 3l-3-2M21 3l-3 2" fill="none" stroke="#111" /></svg></SwapRow>
        </LeftCol>
        <CenterArea>
          <TopRuler />
          <MiddleRow>
            <SideRuler />
            <Board />
            <VScroll>
              <Chev d="up" c="#bbb" />
              <VThumb />
              <Spacer />
              <Chev d="down" />
            </VScroll>
          </MiddleRow>
          <HScrollBar>
            <Chev d="left" />
            <HThumbTrack><HThumb $w={95} /></HThumbTrack>
            <Chev d="right" />
          </HScrollBar>
          <TabStrip><Tab>Плата 1</Tab></TabStrip>
        </CenterArea>
        <PanelRow>
          <Panel $w={199} $bg="#e8d0e8">
            <PanelHead $ls={-.07}><HeadTitle $align="right" $pr={3}>Поиск элементов на плате</HeadTitle><Close /></PanelHead>
            <SearchTop>
              <FormLabel>Выбрать элемент:</FormLabel>
              <SelectBox $mt={2} $w={191}><span>DIP-контакты (с отверстиями)</span><Chev /></SelectBox>
              <FormLabel $mt={5}>Сортировать:</FormLabel>
              <SelectBox $mt={4} $w={190}><span>По диаметру отверстия</span><Chev /></SelectBox>
              <FormLabel $mt={3}>Поиск на стороне:</FormLabel>
              <SelectBox $mt={2} $w={190}><span>Только стороны Ф1 и Ф2</span><Chev /></SelectBox>
            </SearchTop>
            <SearchMid />
            <SearchFoot>
              <CountLine>0 элементов</CountLine>
              <SliderLabel>Авто Масштаб</SliderLabel>
              <SliderTrack>
                <SliderThumb width="10" height="15" viewBox="0 0 10 15"><path d="M1 1h8v9l-4 4-4-4z" fill="#eee" stroke="#aaa" /></SliderThumb>
              </SliderTrack>
              <SliderTicks />
            </SearchFoot>
          </Panel>
          <Splitter $w={9} $x={1} />
          <Panel $w={122} $bg="#f0f0f0">
            <PanelHead $ls={-.4}><HeadTitle $pl={16}>Компоненты</HeadTitle><Close /></PanelHead>
            <CompHead>
              <CompCell $w={25}>№</CompCell><CompCell $w={47}>Обозн</CompCell><CompCell $w={47}>Номин</CompCell>
            </CompHead>
            <CompRow><CompBlank $w={25} /><CompBlank $w={47} /><CompBlank $w={47} /></CompRow>
            <CompBody />
            <CompScroll>
              <Chev d="left" />
              <CompThumbWrap><HThumb $w={17} /></CompThumbWrap>
              <Chev d="right" />
            </CompScroll>
            <CompExport>
              <ArrowRow><svg width="60" height="8" viewBox="0 0 60 8"><path d="M1 4h58M1 4l4-2v4zM59 4l-4-2v4z" stroke="#111" fill="#111" /></svg></ArrowRow>
              <ExportTitle>Включить в экспорт:</ExportTitle>
              <CheckStack>
                {["Порядковый номер", "Слой шелкографии", "Угол поворота", "Корпус (тип)", "Комментарии"].map(t => <CheckLine key={t}><Cb />{t}</CheckLine>)}
              </CheckStack>
              <PlainBtn $w={81} $h={21} $mt={7}>Экспорт</PlainBtn>
            </CompExport>
          </Panel>
          <Panel $w={132} $ml={2} $bg="#cfd3e2">
            <PanelHead $c="#e6e6e6" $ls={-.3}><HeadTitle $pl={16}>Свойства</HeadTitle><Close /></PanelHead>
            <PropHead>Рабочее поле</PropHead>
            <PropBody>
              <FormLabel>Ширина:</FormLabel>
              <FieldLine $mt={3}><Field $w={51}>160.00</Field><Spin /><Unit /></FieldLine>
              <FormLabel $mt={8}>Высота:</FormLabel>
              <FieldLine $mt={3}><Field $w={51}>100.00</Field><Spin /><Unit /></FieldLine>
              <AreaLine><span>Площадь</span><span>160 см²</span></AreaLine>
              <FormLabel $mt={10}>Название платы:</FormLabel>
              <NameInput>Плата 1</NameInput>
              <CheckLine $mt={12} $h={14}><BoxCheck /><MultiLabel>Многослойная</MultiLabel></CheckLine>
            </PropBody>
          </Panel>
          <Panel $w={237} $ml={2} $bg="#e9ccb8">
            <PanelHead $c="#ecdcc8" $ls={-.15}><HeadTitle $align="left" $pl={9}>Контроль Технических Требований</HeadTitle><Close /></PanelHead>
            <KttBody>
              <Group $mt={12} $pb={7}>
                <legend>Минимальное расстояние:</legend>
                <KRow label="Между элементами" value="0.15" />
                <KRow label="Между отверстиями" value="0.50" />
              </Group>
              <Group $mt={7} $pb={8}>
                <legend>Предельные значения:</legend>
                <KRow label="Отверстие Мин:" value="0.30" />
                <KRow label="Отверстие Макс:" value="8.00" />
                <KRow label="Ширина дорожки Мин:" value="0.20" />
                <KRow label="Кольцо контакта Мин:" value="0.20" />
                <KRow label="Линия шелкографии Мин:" value="0.15" />
              </Group>
              <Group $mt={6} $pb={4} $lg={6}>
                <legend>Дополнительно:</legend>
                <KRow label="Шелкография закрывает контакт" />
                <KRow label="Отверстие в SMD-Контакте" />
                <KRow label="Контакт без защитной маски" />
                <KRow label="Защитная маска не на контакте" mt={2} />
              </Group>
              <BtnRow>
                <PlainBtn $w={99} $h={23} $pl={4}><PlayIcon fill="#d05a40" />Вся плата</PlainBtn>
                <PlainBtn $w={100} $h={23} $pl={4}><PlayIcon fill="#e8b8a0" />Только окно</PlainBtn>
              </BtnRow>
              <SelectAll>Выделить все</SelectAll>
              <ResultList />
            </KttBody>
          </Panel>
          <Splitter $w={10} $x={2} />
          <MacroPanel $w={176} $bg="#f0f0f0">
            <MacroHeadWrap>
              <PanelHead $c="#c04848"><HeadTitle $pl={8}>Макросы</HeadTitle><Close /></PanelHead>
            </MacroHeadWrap>
            <TreeWrap>
              <TreeBody>
                <TreeRoot><MinusBox /><RootDash />SMD - IPC782</TreeRoot>
                {TreeNames.map(n => <TreeItem key={n}><TreeDash /><TreeLabel $sel={n === "CFP-MO-02350"}>{n}</TreeLabel></TreeItem>)}
              </TreeBody>
              <TreeScroll>
                <Chev d="up" />
                <TreeThumb />
                <Chev d="down" />
              </TreeScroll>
            </TreeWrap>
            <AsComp><Cb />Как компонент</AsComp>
            <MacroIcons>
              <MacroIconItem $w={18}><Ico w={16} h={16}><path d="M1 1h13l1 1v13H1z" fill="#14147a" /><rect x="4" y="2" width="8" height="4" fill="#fff" /><rect x="4" y="9" width="8" height="5" fill="#fff" /></Ico></MacroIconItem>
              <MacroIconItem $w={28}><Ico w={16} h={16}><path d="M3 4h10v11H3z" fill="#333" /><rect x="1.5" y="1.5" width="13" height="2" fill="#222" /><path d="M6 5v9M8 5v9M10 5v9" stroke="#ddd" /></Ico></MacroIconItem>
              <MacroIconGap />
              <MacroIconItem $w={20}><Ico w={18} h={18}><path d="M14 5a6.5 6.5 0 1 0 1.5 5" fill="none" stroke="#111" strokeWidth="2.4" /><path d="M16 1v6.5h-6.5z" fill="#111" /></Ico></MacroIconItem>
              <MacroIconItem $w={24}><Ico w={16} h={16}><circle cx="8" cy="8" r="7" fill="#111" /><circle cx="8" cy="8" r="2.4" fill="#a51c1c" /></Ico></MacroIconItem>
              <MacroIconItem $w={16}><Ico w={16} h={16}><path d="M8 1v7M5 5l3 3 3-3" stroke="#111" strokeWidth="2" fill="none" /><path d="M4 10h8v2H4zM1 13h14v2H1z" fill="#111" /></Ico></MacroIconItem>
              <TopLabel>Верх</TopLabel>
            </MacroIcons>
            <PreviewHeader />
            <Preview>
              <PreviewSvg width="175" height="260">
                {Array.from({ length: 25 }, (_, i) => (
                  <g key={i}>
                    <rect x={14 + i * 6.04} y="72" width="3.6" height="10" fill="#2d55c0" />
                    <rect x={14 + i * 6.04} y="194" width="3.6" height="10" fill="#2d55c0" />
                  </g>
                ))}
                <rect x="10.5" y="83.5" width="153" height="110" fill="none" stroke="#b81c2a" />
                <rect x="10.5" y="128.5" width="6" height="19" fill="none" stroke="#b81c2a" />
                <path d="M84 138h5M86.5 135.5v5" stroke="#fff" />
              </PreviewSvg>
              <PreviewCaption>Нажать и перенести</PreviewCaption>
            </Preview>
          </MacroPanel>
        </PanelRow>
      </Main>
      <StatusBar>
        <Coords>
          <CoordLine><span>X:</span><span>36,600 мм</span></CoordLine>
          <CoordLine><span>Y:</span><span>27,800 мм</span></CoordLine>
        </Coords>
        <LayerTable>
          <LayerRow $h={18}>
            <LayerName $h={17} $b>видимая</LayerName>
            <LayerCell $c="#2468d8">Ф1</LayerCell>
            <LayerCell $c="#d81c1c">Ш1</LayerCell>
            <LayerCell $c="#1c9c30">Ф2</LayerCell>
            <LayerCell $c="#d8c840">Ш2</LayerCell>
            <LayerCell $c="#f0f0f0">К</LayerCell>
          </LayerRow>
          <LayerRow $h={17}>
            <LayerName $h={17}>активная</LayerName>
            {[0, 1, 2, 3, 4].map(i => <RadioCell key={i}><Radio $on={i === 2} /></RadioCell>)}
          </LayerRow>
        </LayerTable>
        <Question>?</Question>
        <StatusBtn $ml={0}><Ico w={28} h={26}><rect x="2" y="1" width="26" height="25" fill="#808080" /><path d="M0 6h10l10 10" fill="none" stroke="#fff" strokeWidth="7" /><path d="M0 6h10l10 10" fill="none" stroke="#111" strokeWidth="4" /><circle cx="20" cy="17" r="4" fill="#111" stroke="#111" /><circle cx="20" cy="17" r="1.5" fill="#fff" /></Ico></StatusBtn>
        <StatusBtn $ml={4}><Ico w={28} h={28}><circle cx="14" cy="14" r="8" fill="#111" /><path d="M14 1v26M1 14h26" stroke="#b02030" strokeWidth="2" /><circle cx="14" cy="14" r="2.4" fill="#fff" /></Ico></StatusBtn>
        <StatusBtn $ml={4}><Ico w={28} h={28}><ellipse cx="14" cy="14" rx="11" ry="6" fill="none" stroke="#444" strokeWidth="3" transform="rotate(-30 14 14)" /><path d="M4 3 24 25M24 3 4 25" stroke="#d02828" strokeWidth="2.4" /></Ico></StatusBtn>
        <StatusRest>
          <StatusRule />
          <SaMark>SA</SaMark>
        </StatusRest>
      </StatusBar>
      <BottomEdge />
    </Window>
  );
}
